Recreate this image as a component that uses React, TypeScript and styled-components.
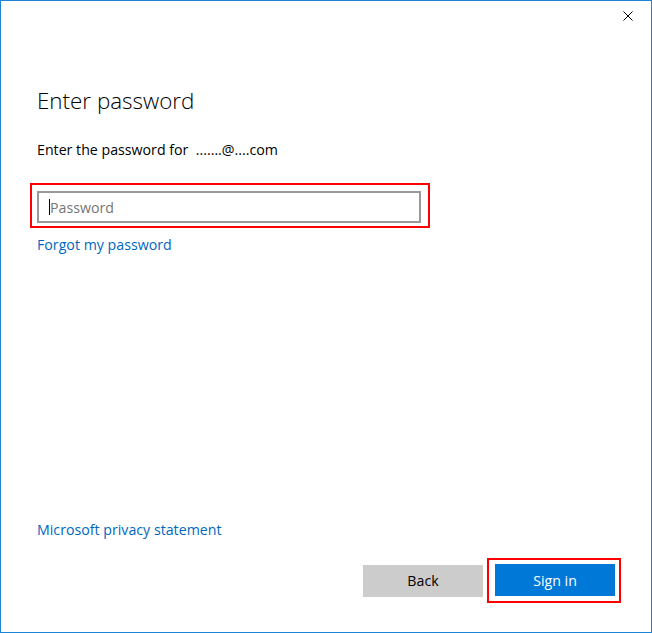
import React from "react";
import styled, { createGlobalStyle } from "styled-components";

const Global = createGlobalStyle`
  html, body { margin: 0; padding: 0; background: #ffffff; }
  body { font-family: "Open Sans", "Noto Sans", sans-serif; }
  * { box-sizing: border-box; }
`;

const Window = styled.div`
  width: 652px;
  height: 633px;
  border: 1px solid #1c84d6;
  background: #ffffff;
  display: flex;
  flex-direction: column;
`;

const TitleBar = styled.div`
  height: 30px;
  display: flex;
  justify-content: flex-end;
`;

const CloseButton = styled.div`
  width: 46px;
  height: 30px;
  display: flex;
  align-items: center;
  justify-content: center;
`;

const Content = styled.div`
  flex: 1;
  display: flex;
  flex-direction: column;
  padding: 0 36px 29px 36px;
`;

const Title = styled.h1`
  margin: 54px 0 0 0;
  font-family: "Open Sans", sans-serif;
  font-weight: 300;
  font-size: 22.4px;
  line-height: 32px;
  color: #000000;
`;

const Subtitle = styled.p`
  margin: 23px 0 0 0;
  font-size: 14.2px;
  line-height: 20px;
  color: #000000;
`;

const Highlight = styled.div<{ $pad: string }>`
  border: 2px solid #ff0000;
  padding: ${(p) => p.$pad};
  display: flex;
`;

const FieldHighlight = styled(Highlight)`
  margin: 23px 0 0 -7px;
  width: 400px;
`;

const PasswordField = styled.div`
  flex: 1;
  height: 32px;
  border: 2px solid #999999;
  display: flex;
  align-items: center;
  padding-left: 10px;
  font-size: 14.2px;
  color: #767676;
`;

const Caret = styled.span`
  display: inline-block;
  width: 1px;
  height: 16px;
  background: #000000;
`;

const Link = styled.a`
  font-size: 14.2px;
  line-height: 20px;
  color: #0067c0;
  text-decoration: none;
  cursor: pointer;
  align-self: flex-start;
`;

const ForgotLink = styled(Link)`
  margin-top: 7px;
`;

const Footer = styled.div`
  margin-top: auto;
  display: flex;
  flex-direction: column;
`;

const ButtonRow = styled.div`
  margin-top: 18px;
  display: flex;
  justify-content: flex-end;
  align-items: center;
  gap: 4px;
  margin-right: -6px;
`;

const Button = styled.button<{ $primary?: boolean }>`
  width: 120px;
  height: 32px;
  border: none;
  padding: 0;
  font-family: "Open Sans", sans-serif;
  font-size: 14.2px;
  background: ${(p) => (p.$primary ? "#0078d7" : "#cccccc")};
  color: ${(p) => (p.$primary ? "#ffffff" : "#000000")};
`;

export default function App() {
  return (
    <>
      <Global />
      <Window>
        <TitleBar>
          <CloseButton>
            <svg width="10" height="10" viewBox="0 0 10 10">
              <path d="M0.5 0.5 L9.5 9.5 M9.5 0.5 L0.5 9.5" stroke="#000" strokeWidth="1" />
            </svg>
          </CloseButton>
        </TitleBar>
        <Content>
          <Title>Enter password</Title>
          <Subtitle>Enter the password for&nbsp;&nbsp;.......@....com</Subtitle>
          <FieldHighlight $pad="6px 7px 3px 5px">
            <PasswordField>
              <Caret />
              <span>Password</span>
            </PasswordField>
          </FieldHighlight>
          <ForgotLink>Forgot my password</ForgotLink>
          <Footer>
            <Link>Microsoft privacy statement</Link>
            <ButtonRow>
              <Button>Back</Button>
              <Highlight $pad="4px 4px 5px 6px">
                <Button $primary>Sign in</Button>
              </Highlight>
            </ButtonRow>
          </Footer>
        </Content>
      </Window>
    </>
  );
}
